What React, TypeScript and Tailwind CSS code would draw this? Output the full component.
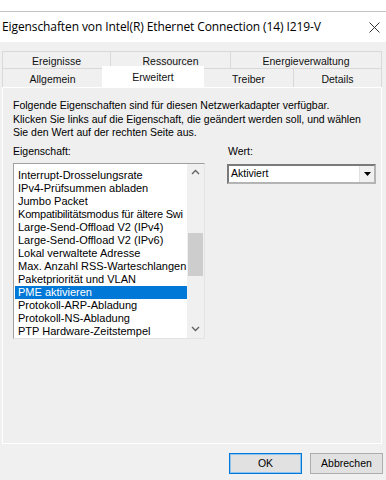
import React from 'react';

const tabsTop = ['Ereignisse', 'Ressourcen', 'Energieverwaltung'];

// last visible chars of the long entry are cut by the scrollbar in the original
const items = [
  'Interrupt-Drosselungsrate',
  'IPv4-Prüfsummen abladen',
  'Jumbo Packet',
  'Kompatibilitätsmodus für ältere Swi',
  'Large-Send-Offload V2 (IPv4)',
  'Large-Send-Offload V2 (IPv6)',
  'Lokal verwaltete Adresse',
  'Max. Anzahl RSS-Warteschlangen',
  'Paketpriorität und VLAN',
  'PME aktivieren',
  'Protokoll-ARP-Abladung',
  'Protokoll-NS-Abladung',
  'PTP Hardware-Zeitstempel',
];

function Chevron({ up }: { up?: boolean }) {
  return (
    <svg width="9" height="6" viewBox="0 0 9 6" className={up ? '' : 'rotate-180'}>
      <path d="M1 5 L4.5 1.5 L8 5" fill="none" stroke="#606060" strokeWidth="1.3" />
    </svg>
  );
}

export default function App() {
  return (
    <div className="w-[386px] h-[480px] bg-[#f0f0f0] overflow-hidden font-['Liberation_Sans',Arial,sans-serif] text-black">
      <div className="h-[11px] bg-white" />
      <div className="h-px bg-[#c4c4c4]" />
      <div className="h-[30px] bg-white flex items-center justify-between pl-[2px] pr-[4px]">
        <span className="font-['Open_Sans',sans-serif] text-[12px] tracking-[-0.1px]">
          Eigenschaften von Intel(R) Ethernet Connection (14) I219-V
        </span>
        <svg width="11" height="11" viewBox="0 0 11 11" className="mr-[2px]">
          <path d="M0.5 0.5 L10.5 10.5 M10.5 0.5 L0.5 10.5" stroke="#333" strokeWidth="1" />
        </svg>
      </div>

      <div className="pl-[2px] pr-[4px] pt-[9px]">
        {/* tabs */}
        <div className="text-[10.5px] text-[#111]">
          <div className="flex h-[17px]">
            {tabsTop.map((t, i) => (
              <div
                key={t}
                className={`flex items-center justify-center pt-[3px] border-t border-r border-[#d9d9d9] bg-[#f0f0f0] ${
                  i === 0 ? 'w-[109px] border-l' : i === 1 ? 'w-[120px]' : 'flex-1'
                }`}
              >
                {t}
              </div>
            ))}
          </div>
          <div className="flex h-[19px] items-end">
            <div className="w-[100px] h-[19px] flex items-center justify-center pt-[3px] border-t border-l border-[#d9d9d9] bg-[#f0f0f0]">
              Allgemein
            </div>
            <div className="w-[102px] h-[22px] -mt-[3px] relative z-10 flex items-start pt-[4px] justify-center bg-white mb-[-1px]">
              Erweitert
            </div>
            <div className="w-[90px] h-[19px] flex items-center justify-center pt-[3px] border-t border-r border-[#d9d9d9] bg-[#f0f0f0]">
              Treiber
            </div>
            <div className="flex-1 h-[19px] flex items-center justify-center pt-[3px] border-t border-r border-[#d9d9d9] bg-[#f0f0f0]">
              Details
            </div>
          </div>
        </div>

        {/* panel */}
        <div className="h-[357px] border border-white bg-[#efefef] pl-[10px] pt-[11px] text-[10.5px]">
          <p className="leading-[13.5px]">
            Folgende Eigenschaften sind für diesen Netzwerkadapter verfügbar.
            <br />
            Klicken Sie links auf die Eigenschaft, die geändert werden soll, und wählen
            <br />
            Sie den Wert auf der rechten Seite aus.
          </p>
          <div className="flex mt-[3px]">
            <div className="w-[192px]">
              <div className="h-[16px] leading-[16px]">Eigenschaft:</div>
              <div className="mt-[4px] h-[176px] flex border-t border-l border-[#a0a0a0] border-r border-b border-r-[#e3e3e3] border-b-[#e3e3e3] bg-white">
                <div className="flex-1 overflow-hidden pt-[5px] pl-[1px] text-[11px] whitespace-nowrap">
                  {items.map((it) => (
                    <div
                      key={it}
                      className={`h-[13px] leading-[13px] pl-[3px] ${
                        it === 'PME aktivieren' ? 'bg-[#0078d7] text-white' : ''
                      } ${it.startsWith('Kompat') ? 'tracking-[-0.2px]' : ''}`}
                    >
                      {it}
                    </div>
                  ))}
                </div>
                <div className="w-[17px] bg-[#f0f0f0] flex flex-col">
                  <div className="h-[17px] flex items-center justify-center">
                    <Chevron up />
                  </div>
                  <div className="h-[52px]" />
                  <div className="h-[43px] bg-[#cdcdcd] mx-[1px]" />
                  <div className="flex-1" />
                  <div className="h-[17px] flex items-center justify-center">
                    <Chevron />
                  </div>
                </div>
              </div>
            </div>
            <div className="ml-[22px] w-[149px]">
              <div className="h-[16px] leading-[16px] pl-[1px]">Wert:</div>
              <div className="mt-[5px] h-[20px] flex border-2 border-t-[#7a7a7a] border-l-[#7a7a7a] border-r-[#b4b4b4] border-b-[#b4b4b4] bg-white">
                <div className="flex-1 flex items-center pl-[2px]">Aktiviert</div>
                <div className="w-[15px] bg-[#f0f0f0] flex items-center justify-center border-l border-[#e0e0e0]">
                  <svg width="7" height="4" viewBox="0 0 7 4">
                    <path d="M0 0 L7 0 L3.5 4 Z" fill="#000" />
                  </svg>
                </div>
              </div>
            </div>
          </div>
        </div>

        {/* buttons */}
        <div className="flex justify-end gap-[8px] mt-[9px] mr-[-1px] text-[10.5px]">
          <button className="w-[73px] h-[21px] bg-[#e1e1e1] border border-[#0078d7] outline outline-1 outline-[#8ec2ee] -outline-offset-2">
            OK
          </button>
          <button className="w-[73px] h-[21px] bg-[#e1e1e1] border border-[#adadad]">Abbrechen</button>
        </div>
      </div>
    </div>
  );
}
